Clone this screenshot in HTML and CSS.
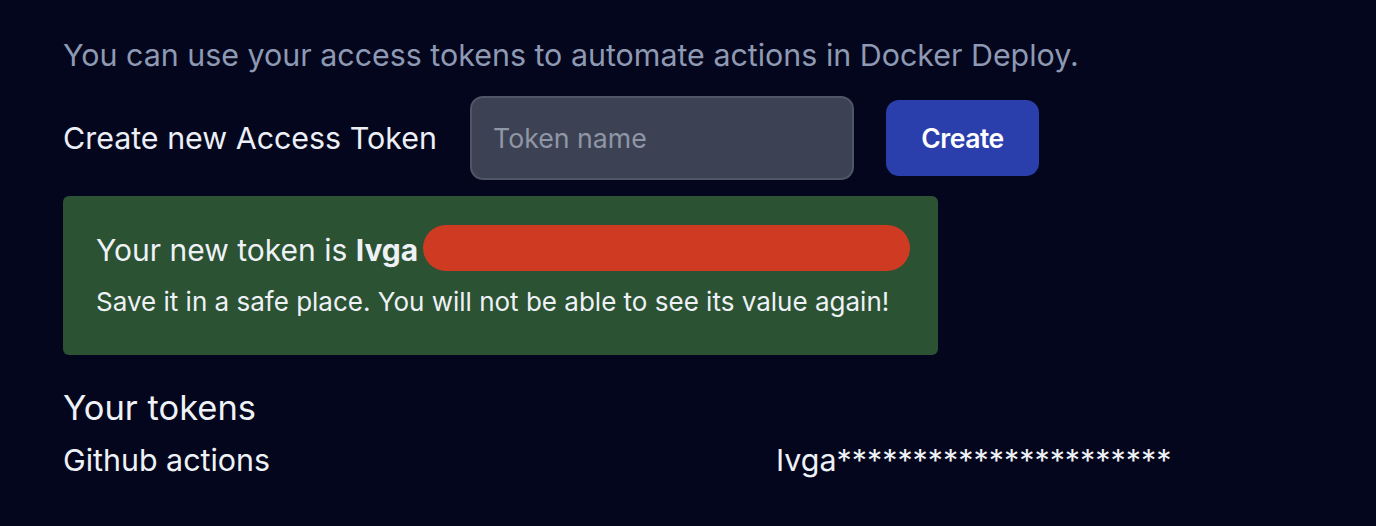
FILE: index.html
```html
<!DOCTYPE html>
<html>
<head>
<meta charset="utf-8">
<link rel="stylesheet" href="styles.css">
</head>
<body>
<main class="page">
  <p class="intro">You can use your access tokens to automate actions in Docker Deploy.</p>
  <div class="create-row">
    <span class="create-label">Create new Access Token</span>
    <input class="token-input" type="text" placeholder="Token name">
    <button class="create-btn">Create</button>
  </div>
  <div class="notice">
    <p class="notice-title"><span class="notice-text">Your new token is <strong>Ivga</strong></span><span class="redact"></span></p>
    <p class="notice-sub">Save it in a safe place. You will not be able to see its value again!</p>
  </div>
  <h2 class="tokens-title">Your tokens</h2>
  <div class="token-row">
    <span class="token-name">Github actions</span>
    <span class="token-value">Ivga**********************</span>
  </div>
</main>
</body>
</html>
```
FILE: styles.css
```css
html, body {
  margin: 0;
  padding: 0;
  background: #03061c;
  height: 100%;
}
body {
  font-family: Inter, "Noto Sans", sans-serif;
  color: #e5e9f0;
}
.page {
  padding: 35px 0 0 63px;
  width: 1250px;
}
.intro {
  margin: 0;
  font-size: 30.4px;
  line-height: 40px;
  color: #8e99b3;
}
.create-row {
  display: flex;
  align-items: center;
  margin-top: 21px;
  height: 84px;
}
.create-label {
  font-size: 30.4px;
  color: #eceff6;
  width: 407px;
}
.token-input {
  box-sizing: border-box;
  width: 384px;
  height: 84px;
  border: 2px solid #4f5666;
  border-radius: 13px;
  background: #3c4254;
  padding: 0 21px;
  font-family: inherit;
  font-size: 26.7px;
  color: #e5e9f0;
  outline: none;
}
.token-input::placeholder {
  color: #8f96a5;
}
.create-btn {
  margin-left: 32px;
  width: 153px;
  height: 76px;
  border: none;
  border-radius: 13px;
  background: #2a3fab;
  color: #ffffff;
  font-family: inherit;
  font-size: 26.5px;
  font-weight: 600;
  letter-spacing: -0.5px;
}
.notice {
  box-sizing: border-box;
  width: 875px;
  height: 159px;
  margin-top: 16px;
  background: #2b5233;
  border-radius: 6px;
  padding: 29px 33px;
}
.notice-title {
  margin: 0;
  display: flex;
  align-items: flex-start;
  font-size: 30px;
  line-height: 50px;
  color: #eef1f6;
}
.notice-text {
  white-space: nowrap;
  flex-shrink: 0;
}
.notice-title strong {
  font-weight: 700;
}
.redact {
  display: inline-block;
  flex-shrink: 0;
  width: 487px;
  height: 46px;
  background: #cf3a22;
  border-radius: 23px;
  margin-left: 5px;
}
.notice-sub {
  margin: 10px 0 0;
  font-size: 26px;
  line-height: 34px;
  color: #eef1f6;
}
.tokens-title {
  margin: 32px 0 0;
  font-size: 34.5px;
  font-weight: 400;
  line-height: 42px;
  color: #eef1f6;
}
.token-row {
  display: flex;
  margin-top: 12px;
  font-size: 30.4px;
  line-height: 38px;
  color: #eef1f6;
}
.token-name {
  width: 713px;
}
```
